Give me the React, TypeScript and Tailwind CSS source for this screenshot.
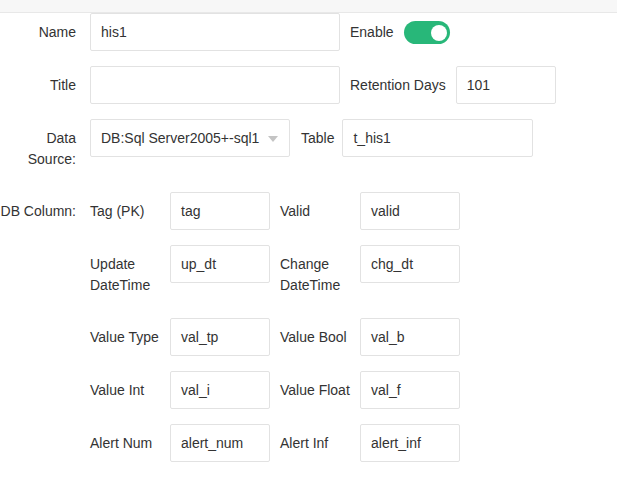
const fieldBox = 'h-[38px] border border-[#e2e2e2] rounded-[2px] bg-white px-[10px] pt-[1px] leading-[35px] text-[#333] whitespace-nowrap overflow-hidden';

function Label({ children }: { children: React.ReactNode }) {
  return <div className="w-[76px] shrink-0 text-right pt-[9px] pb-[7px] leading-[21px]">{children}</div>;
}

function Field({ value, width }: { value: string; width: string }) {
  return <div className={`${fieldBox} ${width}`}>{value}</div>;
}

const dbColumns = [
  ['Tag (PK)', 'tag', 'Valid', 'valid'],
  ['Update DateTime', 'up_dt', 'Change DateTime', 'chg_dt'],
  ['Value Type', 'val_tp', 'Value Bool', 'val_b'],
  ['Value Int', 'val_i', 'Value Float', 'val_f'],
  ['Alert Num', 'alert_num', 'Alert Inf', 'alert_inf'],
];

export default function App() {
  return (
    <div className="w-[617px] h-[484px] bg-white text-[14px] text-[#333] font-['Liberation_Sans',Arial,sans-serif] overflow-hidden">
      <div className="h-[13px] bg-[#f7f7f7] border-b border-[#e8e8e8]" />

      {/* Name / Enable */}
      <div className="flex items-start mb-[15px]">
        <Label>Name</Label>
        <div className="ml-[14px]">
          <Field value="his1" width="w-[250px]" />
        </div>
        <div className="ml-[10px] pt-[9px] pb-[7px] leading-[21px]">Enable</div>
        <div className="ml-[10px] mt-[8px] w-[46px] h-[23px] rounded-full bg-[#28b779] flex items-center justify-end pr-[3px]">
          <div className="w-[16px] h-[16px] rounded-full bg-white" />
        </div>
      </div>

      {/* Title / Retention */}
      <div className="flex items-start mb-[15px]">
        <Label>Title</Label>
        <div className="ml-[14px]">
          <Field value="" width="w-[250px]" />
        </div>
        <div className="ml-[10px] pt-[9px] pb-[7px] leading-[21px]">Retention Days</div>
        <div className="ml-[10px]">
          <Field value="101" width="w-[100px]" />
        </div>
      </div>

      {/* Data source / Table */}
      <div className="flex items-start mb-[15px]">
        <Label>Data Source:</Label>
        <div className="ml-[14px]">
          <div className={`${fieldBox} w-[200px] flex items-center justify-between pr-[11px]`}>
            <span>DB:Sql Server2005+-sql1</span>
            <span className="w-0 h-0 border-l-[5px] border-r-[5px] border-t-[6px] border-l-transparent border-r-transparent border-t-[#c4c4c4]" />
          </div>
        </div>
        <div className="ml-[11px] pt-[9px] pb-[7px] leading-[21px]">Table</div>
        <div className="ml-[8px]">
          <Field value="t_his1" width="w-[191px]" />
        </div>
      </div>

      {/* DB columns */}
      <div className="flex items-start">
        <div className="w-[76px] shrink-0 text-right pt-[9px] pb-[7px] leading-[21px] whitespace-nowrap">DB Column:</div>
        <div className="ml-[14px] flex flex-col gap-[15px]">
          {dbColumns.map(([l1, v1, l2, v2]) => (
            <div key={v1} className="flex items-start">
              <div className="w-[80px] pt-[9px] pb-[7px] leading-[21px]">{l1}</div>
              <Field value={v1} width="w-[100px]" />
              <div className="ml-[10px] w-[80px] pt-[9px] pb-[7px] leading-[21px]">{l2}</div>
              <Field value={v2} width="w-[100px]" />
            </div>
          ))}
        </div>
      </div>
    </div>
  );
}
